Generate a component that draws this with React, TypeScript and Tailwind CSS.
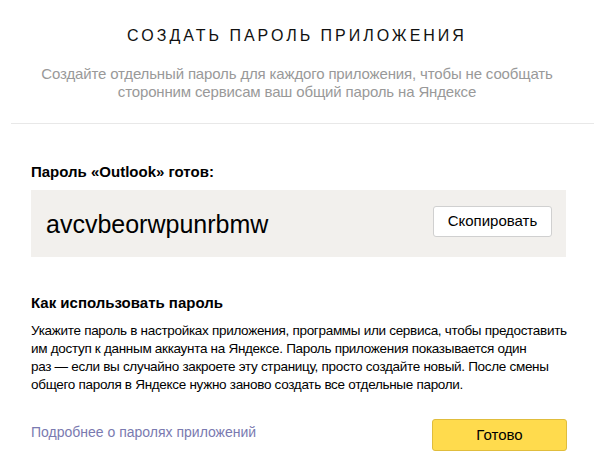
const bodyLines = [
  'Укажите пароль в настройках приложения, программы или сервиса, чтобы предоставить',
  'им доступ к данным аккаунта на Яндексе. Пароль приложения показывается один',
  'раз — если вы случайно закроете эту страницу, просто создайте новый. После смены',
  'общего пароля в Яндексе нужно заново создать все отдельные пароли.',
];

export default function App() {
  return (
    <div className="min-h-[469px] w-[594px] bg-white text-black font-['Liberation_Sans',Arial,sans-serif]">
      {/* header */}
      <div className="pt-[26px] text-center">
        <h1 className="text-[16px] leading-[20px] tracking-[3px] font-normal text-[#111]">
          СОЗДАТЬ ПАРОЛЬ ПРИЛОЖЕНИЯ
        </h1>
        <p className="mt-[19px] text-[15px] leading-[18px] tracking-[-0.15px] text-[#999]">
          Создайте отдельный пароль для каждого приложения, чтобы не сообщать
          <br />
          сторонним сервисам ваш общий пароль на Яндексе
        </p>
      </div>

      <div className="mt-[22px] ml-[11px] h-px bg-[#e8e8e8]" />

      <div className="pl-[31px] pr-[28px]">
        <div className="mt-[39px] text-[15px] leading-[18px] font-bold">Пароль «Outlook» готов:</div>

        <div className="mt-[9px] flex h-[67px] items-center justify-between bg-[#f2f0ed] pl-[15px] pr-[14px]">
          <span className="text-[25px] leading-[30px]">avcvbeorwpunrbmw</span>
          <button className="h-[31px] w-[119px] -mt-[4px] rounded-[3px] border border-[#d0d0d0] bg-white text-[15px] text-black">
            Скопировать
          </button>
        </div>

        <div className="mt-[37px] text-[15px] leading-[18px] font-bold">Как использовать пароль</div>
        <p className="mt-[10px] text-[13.5px] leading-[18px] tracking-[-0.3px] whitespace-nowrap">
          {bodyLines.map((line, i) => (
            <span key={i}>
              {line}
              {i < bodyLines.length - 1 && <br />}
            </span>
          ))}
        </p>

        <div className="mt-[25px] flex items-start justify-between">
          <a href="#" className="mt-[4px] text-[14px] leading-[18px] text-[#7a7ab0]">
            Подробнее о паролях приложений
          </a>
          <button className="h-[32px] w-[135px] -mr-px rounded-[3px] border border-[#e0bd3c] bg-[#ffdb4d] text-[15px] text-black">
            Готово
          </button>
        </div>
      </div>
    </div>
  );
}
